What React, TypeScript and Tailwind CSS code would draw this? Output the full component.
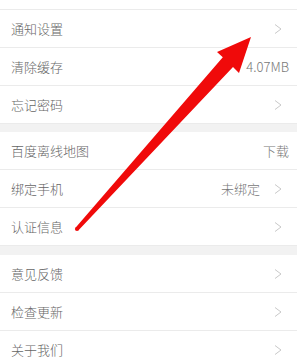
const font = { fontFamily: '"Noto Sans CJK SC", "Noto Sans", sans-serif' };

type Row = { label: string; value?: string; arrow?: boolean };

const sections: Row[][] = [
  [
    { label: '通知设置', arrow: true },
    { label: '清除缓存', value: '4.07MB' },
    { label: '忘记密码', arrow: true },
  ],
  [
    { label: '百度离线地图', value: '下载' },
    { label: '绑定手机', value: '未绑定', arrow: true },
    { label: '认证信息', arrow: true },
  ],
  [
    { label: '意见反馈', arrow: true },
    { label: '检查更新', arrow: true },
    { label: '关于我们', arrow: true },
  ],
];

function Chevron() {
  return (
    <svg width="8" height="10" viewBox="0 0 8 10" className="shrink-0">
      <path d="M1 0.5 L7 5 L1 9.5" fill="none" stroke="#c8c8c8" strokeWidth="1" />
    </svg>
  );
}

function SettingRow({ row }: { row: Row }) {
  return (
    <div className="h-[38px] flex items-center pl-[11px] pr-[15px] border-b border-[#ebebeb] bg-white">
      <span className="flex-1 text-[13px] font-light text-[#666]">{row.label}</span>
      {row.value && (
        <span className={`text-[13px] font-light text-[#777] ${row.arrow ? 'mr-[14px]' : '-mr-[7px]'}`}>
          {row.value}
        </span>
      )}
      {row.arrow && <Chevron />}
    </div>
  );
}

export default function App() {
  return (
    <div className="relative w-[297px] h-[363px] overflow-hidden bg-[#f2f2f2]" style={font}>
      {/* cut-off row at the top */}
      <div className="h-[10px] bg-white border-b border-[#ebebeb]" />

      <div className="flex flex-col">
        {sections.map((rows, i) => (
          <div key={i} className={i === 0 ? '' : i === 1 ? 'mt-[8px]' : 'mt-[9px]'}>
            {rows.map((row) => (
              <SettingRow key={row.label} row={row} />
            ))}
          </div>
        ))}
      </div>

      {/* red annotation arrow */}
      <svg className="absolute inset-0 pointer-events-none" width="297" height="363" viewBox="0 0 297 363">
        <polygon
          points="75.5,227.7 222.8,57.3 217,52 251,37 239,73 233,67 78.5,230.3"
          fill="#f00a0a"
        />
        <circle cx="77" cy="229" r="2.1" fill="#f00a0a" />
      </svg>
    </div>
  );
}
